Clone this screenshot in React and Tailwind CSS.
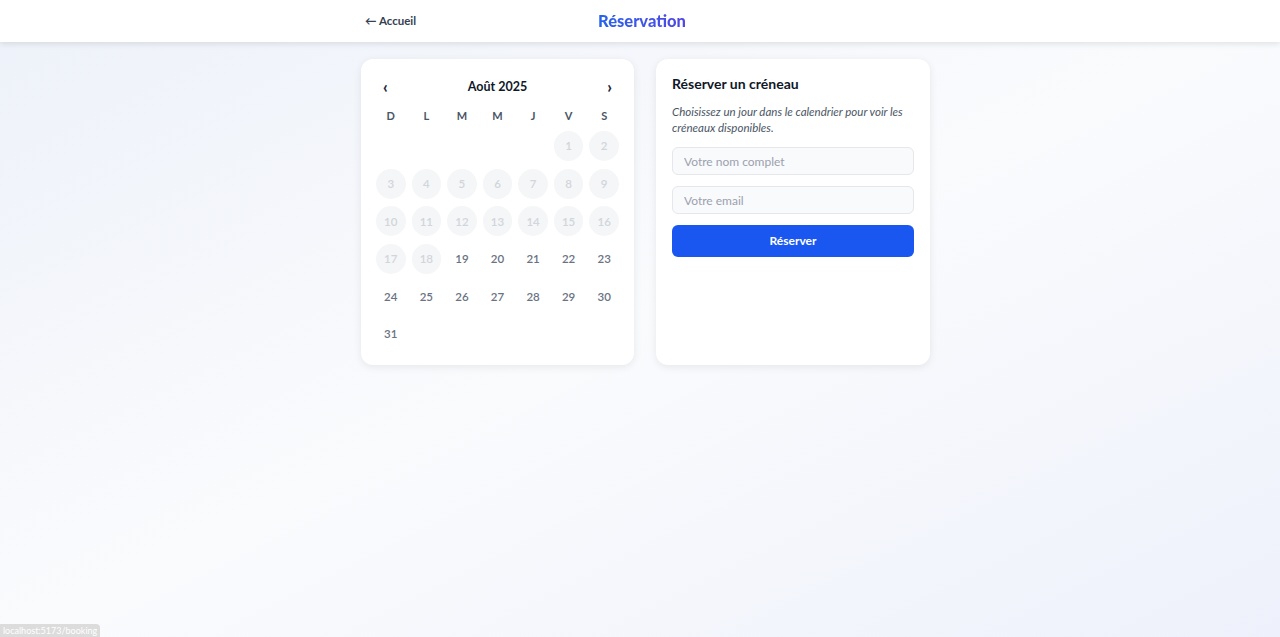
import React from "react";

const days = ["D", "L", "M", "M", "J", "V", "S"];

export default function App() {
  const cells = [];
  for (let i = 0; i < 5; i++) cells.push(null);
  for (let d = 1; d <= 31; d++) cells.push(d);

  return (
    <div
      className="min-h-[637px] relative bg-gradient-to-br from-[#edf1f9] via-[#fafbfd] to-[#eef1fb]"
      style={{ fontFamily: 'Lato, "Noto Sans", sans-serif' }}
    >
      <header className="h-[42px] bg-white shadow-[0_2px_6px_rgba(0,0,0,0.1)] relative z-10">
        <div className="w-[576px] ml-[352px] h-full flex items-center relative">
          <a className="ml-[13px] text-[11.5px] font-bold text-gray-700 flex items-center">
            ← Accueil
          </a>
          <h1 className="absolute left-[246px] top-[9px] text-[16.5px] font-black bg-gradient-to-r from-[#2563eb] to-[#4f46e5] bg-clip-text text-transparent leading-[24px]">
            Réservation
          </h1>
        </div>
      </header>

      <main className="flex gap-[22px] ml-[361px] mt-[17px] items-stretch">
        <section className="w-[273px] h-[306px] bg-white rounded-xl shadow-[0_2px_8px_rgba(0,0,0,0.08)] px-[15px] pt-[17px]">
          <div className="flex items-center justify-between px-[7px] h-[22px]">
            <button className="text-[16px] font-black text-gray-800 leading-none">‹</button>
            <div className="text-[12.5px] font-bold text-gray-900 pt-[1px]">Août 2025</div>
            <button className="text-[16px] font-black text-gray-800 leading-none">›</button>
          </div>
          <div className="grid grid-cols-7 gap-x-[6px] mt-[10px]">
            {days.map((d, i) => (
              <div key={i} className="text-center text-[11px] font-bold text-gray-600 leading-[16px]">
                {d}
              </div>
            ))}
          </div>
          <div className="grid grid-cols-7 gap-x-[6px] gap-y-[7.6px] mt-[7px]">
            {cells.map((d, i) =>
              d === null ? (
                <div key={i} className="h-[30px]" />
              ) : d <= 18 ? (
                <div
                  key={i}
                  className="h-[30px] rounded-full bg-[#f5f6f7] flex items-center justify-center text-[11.5px] font-semibold text-gray-300"
                >
                  {d}
                </div>
              ) : (
                <div
                  key={i}
                  className="h-[30px] rounded-full flex items-center justify-center text-[11.5px] font-semibold text-gray-500"
                >
                  {d}
                </div>
              )
            )}
          </div>
        </section>

        <section className="w-[274px] h-[306px] bg-white rounded-xl shadow-[0_2px_8px_rgba(0,0,0,0.08)] p-4">
          <h2 className="text-[14px] font-bold text-gray-900 leading-[18px]">Réserver un créneau</h2>
          <p className="mt-[11px] text-[11.5px] italic text-gray-600 leading-[16px]">
            Choisissez un jour dans le calendrier pour voir les créneaux disponibles.
          </p>
          <input
            placeholder="Votre nom complet"
            className="mt-[11px] w-full h-[28px] rounded-md border border-gray-200 bg-gray-50 px-[11px] text-[12px] placeholder:text-gray-400 outline-none"
          />
          <input
            placeholder="Votre email"
            className="mt-[11px] w-full h-[28px] rounded-md border border-gray-200 bg-gray-50 px-[11px] text-[12px] placeholder:text-gray-400 outline-none"
          />
          <button className="mt-[11px] w-full h-[32px] rounded-md bg-[#1a56f0] text-white text-[12px] font-bold">
            Réserver
          </button>
        </section>
      </main>

      <div className="absolute left-0 bottom-0 bg-[#dcdcdc] text-white text-[9px] px-[3px] h-[13px] leading-[13px] rounded-tr-sm">
        localhost:5173/booking
      </div>
    </div>
  );
}
